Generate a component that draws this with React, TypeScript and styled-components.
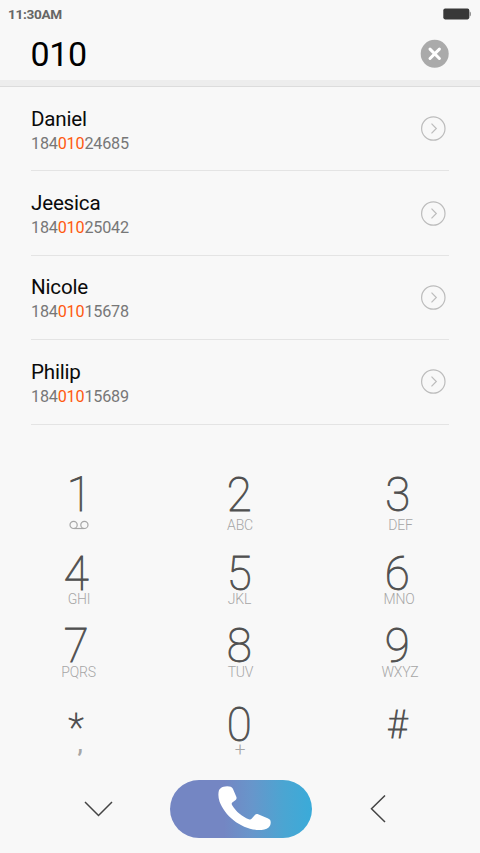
import React from "react";
import styled, { createGlobalStyle } from "styled-components";

const GlobalStyle = createGlobalStyle`
  * { box-sizing: border-box; }
  body {
    margin: 0;
    background: #f8f8f8;
    font-family: Roboto, "Liberation Sans", sans-serif;
  }
`;

const Screen = styled.main`
  width: 480px;
  height: 853px;
  overflow: hidden;
  background: #f8f8f8;
  display: flex;
  flex-direction: column;
`;

const StatusBar = styled.header`
  height: 27px;
  padding: 0 9px 0 8px;
  display: flex;
  align-items: center;
  justify-content: space-between;
`;

const Clock = styled.span`
  font-size: 13.6px;
  font-weight: 700;
  line-height: 16px;
  letter-spacing: -0.3px;
  color: #666;
`;

const NumberBar = styled.section`
  height: 53px;
  padding: 0 31px 0 30.5px;
  display: flex;
  align-items: center;
  justify-content: space-between;
`;

const Typed = styled.span`
  padding-top: 1px;
  font-size: 34px;
  line-height: 40px;
  letter-spacing: -0.4px;
  color: #000;
`;

const PlainButton = styled.button`
  border: 0;
  padding: 0;
  background: none;
  display: flex;
  cursor: pointer;
`;

const Band = styled.div`
  height: 7px;
  background: #ededed;
  border-bottom: 1px solid #dcdcdc;
`;

const ContactList = styled.ul`
  list-style: none;
  margin: 0;
  padding: 0 31px;
  height: 390px;
`;

const ContactRow = styled.li`
  height: 84.4px;
  padding: 0 3px 0 0;
  border-bottom: 1px solid #e4e4e4;
  display: flex;
  align-items: center;
  justify-content: space-between;
`;

const ContactText = styled.div`
  display: flex;
  flex-direction: column;
  padding-top: 5px;
`;

const ContactName = styled.span`
  font-size: 20.6px;
  line-height: 25px;
  letter-spacing: -0.2px;
  color: #0a0a0a;
`;

const ContactNumber = styled.span`
  font-size: 16.2px;
  line-height: 24px;
  letter-spacing: -0.2px;
  color: #777;
`;

const Match = styled.span`
  color: #ff5a10;
`;

const Keypad = styled.section`
  height: 302px;
  display: grid;
  grid-template-columns: repeat(3, 160px);
  grid-template-rows: 79px 72px 79px 72px;
`;

const Key = styled.button<{ $gap: number }>`
  border: 0;
  padding: 0;
  background: none;
  font-family: inherit;
  display: flex;
  flex-direction: column;
  align-items: center;
  justify-content: flex-start;
  gap: ${(p) => p.$gap}px;
  cursor: pointer;
`;

const Digit = styled.span<{ $dx: number; $dy?: number; $size?: number }>`
  height: 36px;
  font-size: ${(p) => p.$size ?? 48.5}px;
  font-weight: 100;
  line-height: 36px;
  color: #505050;
  -webkit-text-stroke: 0.9px #505050;
  transform: translate(${(p) => p.$dx}px, ${(p) => p.$dy ?? 0}px) scaleX(0.94);
`;

const Letters = styled.span<{ $dx: number; $dy?: number; $size?: number; $weight?: number }>`
  height: 14px;
  display: flex;
  align-items: center;
  font-size: ${(p) => p.$size ?? 14}px;
  font-weight: ${(p) => p.$weight ?? 300};
  line-height: 14px;
  letter-spacing: -0.2px;
  color: #a6a6a6;
  transform: translate(${(p) => p.$dx}px, ${(p) => p.$dy ?? -0.4}px);
`;

const IconLegend = styled.span`
  height: 14px;
  display: flex;
  align-items: center;
  padding-right: 2px;
`;

const ActionBar = styled.footer`
  height: 74px;
  display: grid;
  grid-template-columns: 170px 142px 1fr;
`;

const SideAction = styled(PlainButton)<{ $pad: string }>`
  padding: ${(p) => p.$pad};
`;

const CallButton = styled(PlainButton)`
  width: 142px;
  height: 58px;
  margin-top: 1px;
  border-radius: 29px;
  padding: 6px 0 0 48px;
  background: linear-gradient(90deg, #7486c3 0%, #7486c3 38%, #6796cb 58%, #4ba5d2 80%, #3aabd9 100%);
`;

const contacts = [
  { name: "Daniel", before: "184", match: "010", after: "24685" },
  { name: "Jeesica", before: "184", match: "010", after: "25042" },
  { name: "Nicole", before: "184", match: "010", after: "15678" },
  { name: "Philip", before: "184", match: "010", after: "15689" },
];

type KeySpec = {
  digit: string;
  letters?: string;
  dx: number;
  lx?: number;
  gap: number;
  dy?: number;
  ly?: number;
  size?: number;
  lsize?: number;
  lweight?: number;
};

const keys: KeySpec[] = [
  { digit: "1", dx: -1, gap: 5 },
  { digit: "2", letters: "ABC", dx: -1, lx: 0, gap: 5 },
  { digit: "3", letters: "DEF", dx: -2.5, lx: 0.5, gap: 5 },
  { digit: "4", letters: "GHI", dx: -4, lx: -1, gap: 0 },
  { digit: "5", letters: "JKL", dx: -1, lx: -0.5, gap: 0 },
  { digit: "6", letters: "MNO", dx: -3, lx: -1, gap: 0 },
  { digit: "7", letters: "PQRS", dx: -4, lx: -1.5, gap: 1 },
  { digit: "8", letters: "TUV", dx: -1, lx: 0.5, gap: 1 },
  { digit: "9", letters: "WXYZ", dx: -3, lx: 0, gap: 1 },
  { digit: "*", letters: ",", dx: -4, lx: 0, ly: -5, gap: 0, dy: 3, size: 38, lsize: 23, lweight: 600 },
  { digit: "0", letters: "+", dx: -1, lx: 0, ly: 0, gap: 0, lsize: 19 },
  { digit: "#", letters: "", dx: -3, lx: 0, gap: 0, dy: 0, size: 38 },
];

const Battery = () => (
  <svg width="28" height="12" viewBox="0 0 28 12">
    <rect x="0.3" y="0.6" width="26" height="10.8" rx="1.8" fill="#383838" />
    <path d="M26.6 3.5c1 .2 1.2 1 1.2 2.5s-.2 2.3-1.2 2.5z" fill="#777" />
  </svg>
);

const ClearIcon = () => (
  <svg width="29" height="29" viewBox="0 0 29 29">
    <circle cx="14.7" cy="14.8" r="14" fill="#aaa" />
    <path d="M10 10.1l9.4 9.4M19.4 10.1l-9.4 9.4" stroke="#fff" strokeWidth="3" strokeLinecap="round" />
  </svg>
);

const DetailIcon = () => (
  <svg width="25" height="25" viewBox="0 0 25 25" fill="none" stroke="#bcbcbc">
    <circle cx="12.3" cy="12.5" r="11.7" strokeWidth="1.2" />
    <path d="M10.5 7.7l4.8 4.8-4.8 4.8" strokeWidth="1.2" />
  </svg>
);

const VoicemailIcon = () => (
  <svg width="20" height="10" viewBox="0 0 20 10" fill="none" stroke="#a6a6a6" strokeWidth="1.2">
    <circle cx="4.6" cy="4.9" r="3.6" />
    <circle cx="15.4" cy="4.9" r="3.6" />
    <path d="M4.6 8.5h10.8" />
  </svg>
);

const HandsetIcon = () => (
  <svg width="54" height="46" viewBox="0 0 54 46">
    <path
      d="M5.500.8C7.500 0 11 .1 12.800.7c1 .4 1.700 1.300 2.200 2.300l3.300 7.800c.7 1.600-.1 2.900-1.300 3.700l-2.700 2.100c-.8.700-.7 1.500-.3 2.400 4.200 7 10.200 11.800 17.500 14.500.8.300 1.500 0 2.100-.7l3.300-3.900c.8-.9 2-1.200 3.200-.7l9.500 4c2.200.9 3.200 1.900 3.100 4.300-.1 2-.5 3.500-2.100 4.900-2.800 2.100-7.300 2.900-12 2.500C22.500 42.600 6.500 29.500 1.500 15.500.2 11.500.1 7.500.9 4.500 1.500 2.800 3.400 1.400 5.500.8z"
      fill="#fff"
    />
  </svg>
);

export default function App() {
  return (
    <>
      <GlobalStyle />
      <Screen>
        <StatusBar>
          <Clock>11:30AM</Clock>
          <Battery />
        </StatusBar>
        <NumberBar>
          <Typed>010</Typed>
          <PlainButton aria-label="Clear">
            <ClearIcon />
          </PlainButton>
        </NumberBar>
        <Band />
        <ContactList>
          {contacts.map((c) => (
            <ContactRow key={c.name}>
              <ContactText>
                <ContactName>{c.name}</ContactName>
                <ContactNumber>
                  {c.before}
                  <Match>{c.match}</Match>
                  {c.after}
                </ContactNumber>
              </ContactText>
              <PlainButton aria-label="Details">
                <DetailIcon />
              </PlainButton>
            </ContactRow>
          ))}
        </ContactList>
        <Keypad>
          {keys.map((k) => (
            <Key key={k.digit} $gap={k.gap}>
              <Digit $dx={k.dx} $dy={k.dy} $size={k.size}>
                {k.digit}
              </Digit>
              {k.letters === undefined ? (
                <IconLegend>
                  <VoicemailIcon />
                </IconLegend>
              ) : (
                <Letters $dx={k.lx ?? 0} $dy={k.ly} $size={k.lsize} $weight={k.lweight}>
                  {k.letters}
                </Letters>
              )}
            </Key>
          ))}
        </Keypad>
        <ActionBar>
          <SideAction $pad="22px 0 0 84px" aria-label="Hide keypad">
            <svg width="29" height="17" viewBox="0 0 29 17" fill="none" stroke="#444" strokeWidth="1.5">
              <path d="M1 1L14.5 14.5L28 1" />
            </svg>
          </SideAction>
          <CallButton aria-label="Call">
            <HandsetIcon />
          </CallButton>
          <SideAction $pad="16px 0 0 58px" aria-label="Delete">
            <svg width="17" height="29" viewBox="0 0 17 29" fill="none" stroke="#444" strokeWidth="1.5">
              <path d="M15 0.5L1.5 13.8L15 27" />
            </svg>
          </SideAction>
        </ActionBar>
      </Screen>
    </>
  );
}
